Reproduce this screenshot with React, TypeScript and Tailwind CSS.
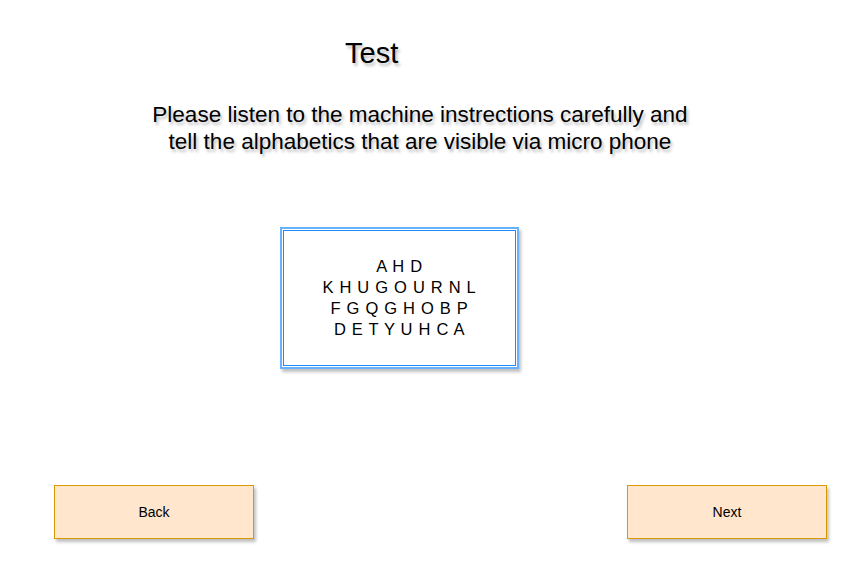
const shadow = '[text-shadow:2px_3px_3px_rgba(0,0,0,0.25)]';

function Button({ label }: { label: string }) {
	return (
		<button className="w-[200px] h-[54px] bg-[#ffe6cc] border border-[#d79b00] shadow-[2px_3px_3px_rgba(0,0,0,0.25)] text-[14px] text-black">
			{label}
		</button>
	);
}

export default function App() {
	return (
		<div className="w-[867px] h-[575px] bg-white flex flex-col font-['Liberation_Sans',Arial,sans-serif] text-black">
			<h1 className={`ml-[345px] mt-[36px] w-fit text-[29px] leading-[34px] ${shadow}`}>Test</h1>
			<p className={`mt-[31px] ml-[110px] w-[620px] text-center text-[22.5px] leading-[27px] ${shadow}`}>
				Please listen to the machine instrections carefully and
				<br />
				tell the alphabetics that are visible via micro phone
			</p>
			<div className="mt-[72px] ml-[280px] w-[239px] h-[142px] border-2 border-[#66b2ff] p-[1px] shadow-[2px_3px_3px_rgba(0,0,0,0.25)]">
				<div className="w-full h-full border border-[#1a8cff] flex flex-col items-center justify-center text-[16.5px] leading-[21px] tracking-[0.7px]">
					<span>A H D</span>
					<span>K H U G O U R N L</span>
					<span>F G Q G H O B P</span>
					<span>D E T Y U H C A</span>
				</div>
			</div>
			<div className="mt-auto mb-[36px] ml-[54px] mr-[40px] flex justify-between">
				<Button label="Back" />
				<Button label="Next" />
			</div>
		</div>
	);
}
